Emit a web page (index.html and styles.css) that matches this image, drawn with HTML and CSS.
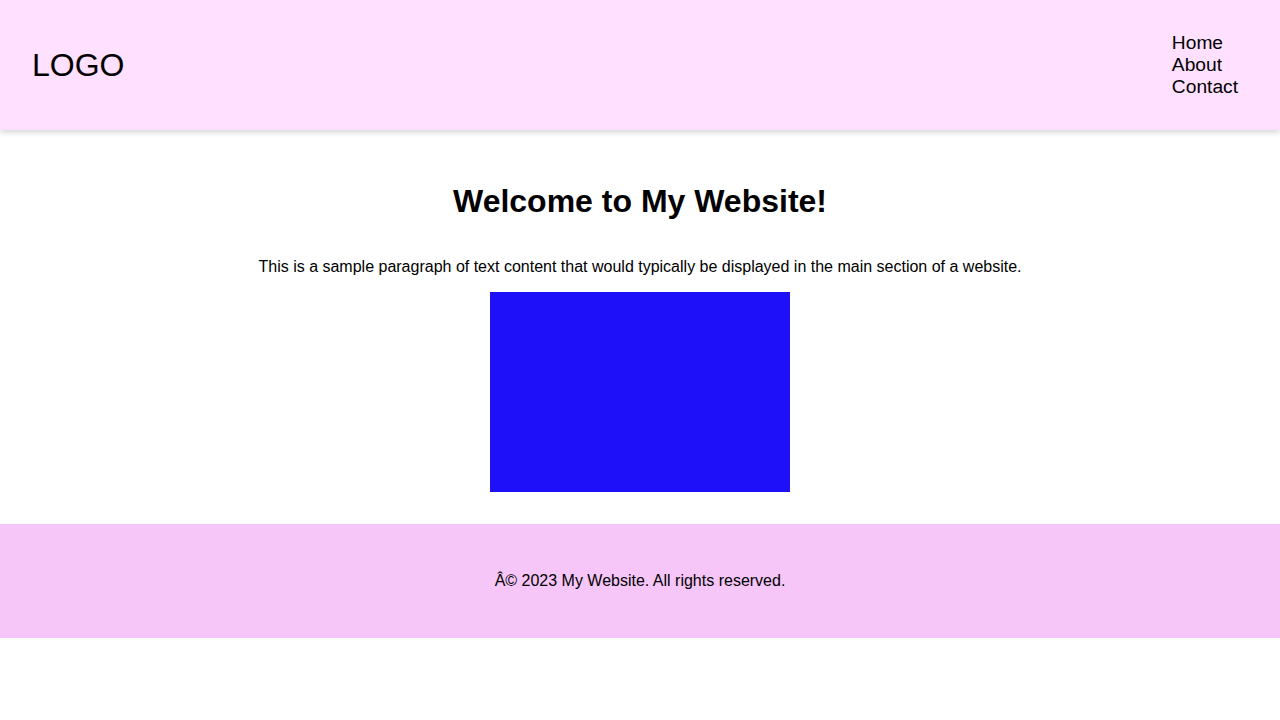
FILE: index.html
```html
<!DOCTYPE html>
<html lang="en">
<head>
<meta charset="utf-8">
<title>My Website</title>
<link rel="stylesheet" href="styles.css">
</head>
<body>
<header class="site-header">
  <div class="logo">LOGO</div>
  <nav class="nav">
    <ul class="nav-list">
      <li class="nav-item">Home</li>
      <li class="nav-item">About</li>
      <li class="nav-item">Contact</li>
    </ul>
  </nav>
</header>
<main class="main">
  <h1 class="title">Welcome to My Website!</h1>
  <p class="intro">This is a sample paragraph of text content that would typically be displayed in the main section of a website.</p>
  <div class="block"></div>
</main>
<footer class="site-footer">
  <p class="copy">Â© 2023 My Website. All rights reserved.</p>
</footer>
</body>
</html>
```

FILE: styles.css
```css
body {
  margin: 0;
  font-family: "Liberation Sans", Arial, sans-serif;
  color: #000;
  background: #fff;
}

.site-header {
  display: flex;
  justify-content: space-between;
  align-items: center;
  padding: 16px 32px;
  background: #ffe0ff;
  box-shadow: 0 2px 6px rgba(0, 0, 0, 0.18);
}

.logo {
  font-size: 32px;
}

.nav-list {
  list-style: none;
  margin: 16px 0;
  padding: 0;
}

.nav-item {
  font-size: 19.2px;
  padding: 0 10px;
}

.main {
  display: flex;
  flex-direction: column;
  align-items: center;
  padding: 32px;
  text-align: center;
}

.title {
  font-size: 32px;
  margin: 21.44px 0;
}

.intro {
  font-size: 16px;
  margin: 16px 0;
}

.block {
  width: 300px;
  height: 200px;
  background: #1e10f9;
}

.site-footer {
  padding: 32px;
  background: #f6c6f8;
  text-align: center;
}

.copy {
  margin: 16px 0;
  font-size: 16px;
}
```
